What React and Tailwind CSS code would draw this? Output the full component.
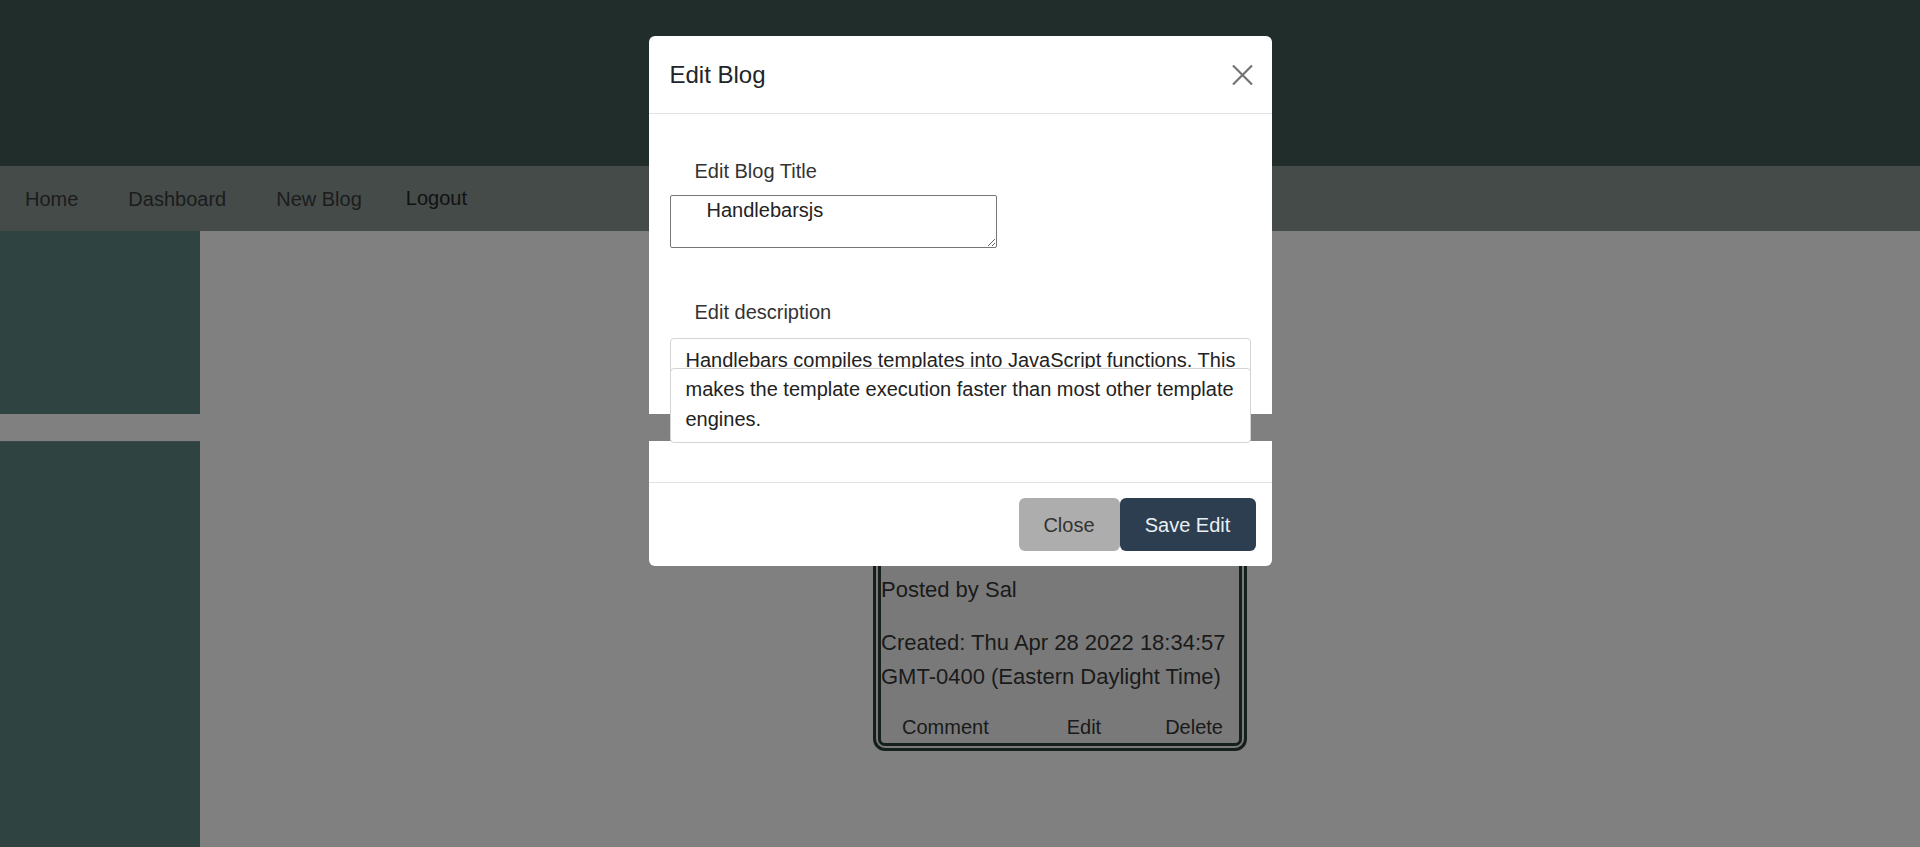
import React from "react";

export default function App() {
  return (
    <div className="relative w-full h-[847px] overflow-hidden bg-[#808080] font-['Liberation_Sans',Arial,sans-serif]">
      {/* page (already dimmed by modal backdrop) */}
      <header className="h-[166px] bg-[#212d2b]" />
      <nav className="h-[65px] bg-[#454b49] flex items-center text-[20px] text-[#1c1c1c]">
        <a className="px-[25px]">Home</a>
        <a className="px-[25px]">Dashboard</a>
        <a className="px-[25px]">New Blog</a>
        <button className="pl-[19px] text-[20px] text-[#111] -mt-[2px]">Logout</button>
      </nav>
      <div className="flex h-[616px]">
        <aside className="w-[200px] flex flex-col">
          <div className="h-[183px] bg-[#2f4341]" />
          <div className="mt-[27px] flex-1 bg-[#2f4341] border-t border-[#3e4947]" />
        </aside>
        <main className="flex-1 flex flex-col items-center">
          <div className="mt-[40px] w-[374px] border-[8px] border-double border-[#15201d] rounded-[12px] bg-[#797979] text-[#1a1a1a]">
            <div className="h-[294px] overflow-hidden">
              <h2 className="text-[28px] pt-[10px]">Handlebarsjs</h2>
              <p className="text-[22px] leading-[34px]">
                Handlebars compiles templates into JavaScript functions. This makes the template execution faster than most other template engines.
              </p>
            </div>
            <p className="text-[22px] leading-[34px]">Posted by Sal</p>
            <p className="mt-[19px] text-[22px] leading-[34px]">
              Created: Thu Apr 28 2022 18:34:57 GMT-0400 (Eastern Daylight Time)
            </p>
            <div className="mt-[21px] pb-[4px] flex text-[20px] leading-[24px]">
              <span className="ml-[21px]">Comment</span>
              <span className="ml-[78px]">Edit</span>
              <span className="ml-[64px]">Delete</span>
            </div>
          </div>
        </main>
      </div>

      {/* modal */}
      <div className="absolute inset-0 flex justify-center pt-[36px]">
        <div className="w-[623px] h-[530px] bg-white rounded-[6px] flex flex-col">
          <div className="h-[78px] shrink-0 flex items-center justify-between pl-[21px] pr-[18px] border-b border-[#dee2e6]">
            <h5 className="text-[24px] leading-[29px] text-[#212529]">Edit Blog</h5>
            <svg width="23" height="22" viewBox="0 0 23 22" className="text-[#737373]">
              <path d="M2 1.5 L21 20.5 M21 1.5 L2 20.5" stroke="currentColor" strokeWidth="2.2" fill="none" />
            </svg>
          </div>
          <div className="flex flex-col px-[21px] pt-[45px] pb-[39px] text-[#333]">
            <label className="ml-[25px] text-[20px] leading-[24px]">Edit Blog Title</label>
            <textarea
              readOnly
              value="Handlebarsjs"
              className="mt-[12px] w-[327px] h-[53px] border border-[#767676] rounded-[2px] pt-[3px] pl-[36px] text-[20px] leading-[23px] text-[#222] bg-white outline-none"
            />
            <label className="mt-[52px] ml-[25px] text-[20px] leading-[24px]">Edit description</label>
            <div className="mt-[14px] h-[40px] overflow-hidden border border-[#d4d4d4] rounded-[4px] px-[15px] pt-[6px] text-[20px] leading-[30px] text-[#222] whitespace-nowrap">
              Handlebars compiles templates into JavaScript functions. This
            </div>
            <div className="relative z-20 -mt-[10px] bg-white border border-[#d4d4d4] rounded-[4px] px-[15px] pt-[5px] pb-[8px] text-[20px] leading-[30px] text-[#222] whitespace-nowrap">
              makes the template execution faster than most other template
              <br />
              engines.
            </div>
          </div>
          <div className="border-t border-[#dee2e6] flex justify-end pt-[15px] pb-[15px] pr-[16px]">
            <button className="w-[101px] h-[53px] bg-[#adadad] rounded-[6px] text-[20px] text-[#333]">Close</button>
            <button className="w-[136px] h-[53px] bg-[#2c3e50] rounded-[6px] text-[20px] text-[#eaeff3]">Save Edit</button>
          </div>
        </div>
      </div>

      {/* band over modal */}
      <div className="absolute left-0 right-0 top-[414px] h-[27px] bg-[#808080] z-10" />
    </div>
  );
}
